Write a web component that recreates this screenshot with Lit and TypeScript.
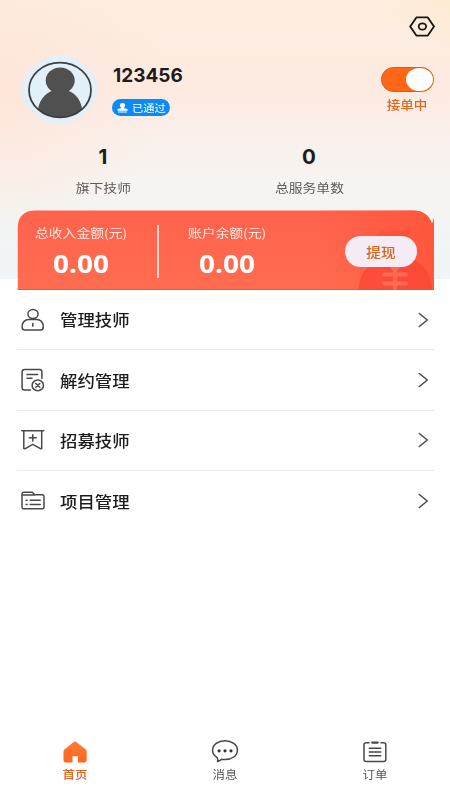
import { LitElement, html, css, svg } from "lit";
import { customElement } from "lit/decorators.js";

const menuIcons = {
  person: svg`<ellipse cx="12" cy="6" rx="5.1" ry="4.5"/><path d="M1.2 19.5v-1.7c0-3.6 3-6.2 6.4-6.2h8.2c3.6 0 6.4 2.6 6.4 6.2v1.7c0 1.6-1 2.5-2.6 2.5H3.8c-1.6 0-2.6-.9-2.6-2.5z"/><path d="M11.8 15.6v2.6"/>`,
  contract: svg`<path d="M9.5 22H3.6c-1.6 0-2.5-.8-2.5-2.3V4c0-1.5.9-2.4 2.5-2.4h15c1.5 0 2.3.9 2.3 2.4v6.5M6 6.4h10.6M6 10.3h5"/><ellipse cx="16.8" cy="17.4" rx="5.7" ry="5.3"/><path d="M14.8 15.5l4 3.8M18.8 15.5l-4 3.8"/>`,
  banner: svg`<path d="M.8 2.8h22M2.8 2.8v17.6l1 .4 8-4.4 8 4.4.9-.4V2.8M8.4 9.8h6.8M11.8 6.7v6.2"/>`,
  folder: svg`<path d="M1 18.2V4.9c0-1 .6-1.6 1.7-1.6h8.6l2.4 2.5h7.5c1.1 0 1.8.6 1.8 1.6v10.8c0 1.1-.7 1.6-1.8 1.6H2.7C1.6 19.8 1 19.3 1 18.2zM1 5.9h12.7"/><path d="M5 11.3h1M9.2 11.3h10M5 15.4h1M9.2 15.4h10"/>`,
};

const rows = [
  { icon: menuIcons.person, label: "管理技师" },
  { icon: menuIcons.contract, label: "解约管理" },
  { icon: menuIcons.banner, label: "招募技师" },
  { icon: menuIcons.folder, label: "项目管理" },
];

@customElement("app-root")
export class AppRoot extends LitElement {
  static styles = css`
    :host {
      display: flex;
      flex-direction: column;
      position: relative;
      width: 450px;
      height: 800px;
      overflow: hidden;
      background: #fff;
      color: #1c1c1c;
      font-family: "Noto Sans", "Noto Sans CJK SC", sans-serif;
    }
    * { box-sizing: border-box; }
    svg { display: block; flex: none; }
    .cjk { font-family: "Noto Sans CJK SC", sans-serif; }
    .wide { display: inline-block; white-space: nowrap; transform: scaleX(1.13); }
    .left { transform-origin: left center; }
    .hero {
      height: 279px;
      flex: none;
      background:
        linear-gradient(205deg, #fdebd2 0, #fdebd200 12%),
        radial-gradient(ellipse 170px 150px at 0 85px, #fee6d9 0, #fee6d900 100%),
        linear-gradient(180deg, #fdeee2 0, #fdeae0 32%, #f9f1ec 50%, #f5f4f2 72%, #eff4f7 100%);
    }
    .top { display: flex; justify-content: flex-end; padding: 16px 15px 0 0; height: 53px; }
    .profile { display: flex; height: 74px; padding: 0 16px 0 17px; }
    .who { flex: 1; padding: 9px 0 0 12px; }
    .name { display: block; height: 28px; line-height: 28px; font-size: 19px; font-weight: 700; font-family: Inter, sans-serif; }
    .name .wide { transform: none; }
    .badge {
      display: flex; align-items: center; gap: 4px; width: 58px; height: 17px; margin: 9px 0 0 -1px;
      padding-left: 5px; border-radius: 9px; background: #098bfb; color: #fff; font-size: 10.5px; line-height: 16px;
    }
    .badge .wide { transform: scaleX(1.07); }
    .online { width: 53px; padding-top: 14px; text-align: center; color: #de681f; font-size: 12px; font-weight: 500; }
    .toggle { display: flex; justify-content: flex-end; height: 25px; border: 1px solid #d35d1c; border-radius: 13px; background: #ff6716; }
    .knob { width: 27px; height: 23px; border-radius: 50%; background: #fff; }
    .online .label { line-height: 18px; margin-top: 4px; }
    .stats { display: grid; grid-template-columns: 206px 206px; text-align: center; padding-top: 16px; }
    .num { font-size: 20.5px; font-weight: 700; line-height: 28px; font-family: Inter, sans-serif; }
    .num .wide { transform: none; }
    .stats .label { font-size: 12.2px; line-height: 18px; margin-top: 8px; color: #5d5956; }
    .card {
      position: absolute; left: 17px; top: 210px; width: 417px; height: 80px; overflow: hidden;
      display: flex; color: #fff;
    }
    .plate { position: absolute; left: 0; top: 0; }
    .sum { position: relative; text-align: center; padding-top: 14px; }
    .first { width: 128px; }
    .second { width: 136px; }
    .bar { position: relative; width: 2px; height: 53px; margin: 15px 0 0 12px; background: #ffd5cb; }
    .sum .label { font-size: 12px; line-height: 18px; color: #ffe8e1; }
    .sum .label .wide { transform: scaleX(1.15); }
    .amount { font-size: 25px; font-weight: 700; line-height: 30px; margin-top: 6px; }
    .amount .wide { transform: scaleX(1.12); }
    .withdraw {
      position: relative; width: 72px; height: 31px; margin: 26px 0 0 50px; border-radius: 16px;
      background: #f5ebf5; color: #dc6316; font-size: 13px; line-height: 31px; text-align: center; font-weight: 500;
    }
    .menu { padding: 11px 16px 0 17px; }
    .row { display: flex; align-items: center; height: 60.4px; border-bottom: 1px solid #ececec; padding: 0 3px 0 4px; }
    .row:last-child { border-bottom: 0; }
    .row .text { flex: 1; padding: 0 0 1px 15px; font-size: 15.4px; line-height: 24px; font-weight: 500; }
    .ink { fill: none; stroke: #484848; stroke-width: 1.5; stroke-linecap: round; stroke-linejoin: round; }
    .nav { margin-top: auto; height: 62px; display: grid; grid-template-columns: repeat(3, 1fr); justify-items: center; }
    .tab { display: flex; flex-direction: column; align-items: center; font-size: 11px; line-height: 16px; color: #555; gap: 2px; }
    .on { color: #dc6420; font-weight: 500; }
  `;

  render() {
    return html`
      <section class="hero">
        <div class="top">
          <svg width="26" height="21" viewBox="0 0 26 21" fill="none" stroke="#171615" stroke-width="1.8" stroke-linejoin="round">
            <path d="M7.4 1.4h11.4L25 10.5 18.8 19.6H7.4L1.2 10.5z"/><ellipse cx="13.4" cy="10.5" rx="3.7" ry="3.2"/>
          </svg>
        </div>
        <div class="profile">
          <svg width="84" height="74" viewBox="0 0 84 74">
            <defs>
              <filter id="soft" x="-10%" y="-10%" width="120%" height="120%"><feGaussianBlur stdDeviation="1.6"/></filter>
              <clipPath id="face"><ellipse cx="43" cy="37" rx="31" ry="27.5"/></clipPath>
            </defs>
            <path filter="url(#soft)" fill="#e2f0f9" d="M25 7Q43-2 60 6L75 19Q87 37 75 53L60 67Q43 75 25 67L10 54Q-2 37 10 19z"/>
            <g clip-path="url(#face)" fill="#505050">
              <ellipse cx="43.2" cy="27.5" rx="14.5" ry="13"/>
              <path d="M20.5 62C20.5 48 28 40 36 37.5h14.5C59 40 65.500 48 65.500 62v5h-45z"/><path d="M34 35h18l-1 6H35z"/>
            </g>
            <ellipse cx="43" cy="37" rx="31" ry="27.3" fill="none" stroke="#3f3f42" stroke-width="1.8"/>
          </svg>
          <div class="who">
            <span class="name"><span class="wide left">123456</span></span>
            <div class="badge">
              <svg width="11" height="10" viewBox="0 0 11 10" fill="#fff"><ellipse cx="5.5" cy="2.4" rx="2.6" ry="2.3"/><path d="M4.2 3h2.6l.3 2.3 3.4.7v1.8H.5V6l3.4-.7zM1 8.4h9v1.2H1z"/></svg>
              <span class="wide left cjk">已通过</span>
            </div>
          </div>
          <div class="online">
            <div class="toggle"><div class="knob"></div></div>
            <div class="label cjk"><span class="wide">接单中</span></div>
          </div>
        </div>
        <div class="stats">
          <div><div class="num"><span class="wide">1</span></div><div class="label cjk"><span class="wide">旗下技师</span></div></div>
          <div><div class="num"><span class="wide">0</span></div><div class="label cjk"><span class="wide">总服务单数</span></div></div>
        </div>
      </section>
      <section class="card">
        <svg class="plate" width="417" height="80" viewBox="0 0 417 80">
          <defs>
            <linearGradient id="red" x1="0" y1="0" x2="0" y2="1"><stop offset="0" stop-color="#ff624c"/><stop offset="1" stop-color="#ff6d50"/></linearGradient>
            <linearGradient id="edge"><stop offset=".72" stop-color="#ff5339" stop-opacity="0"/><stop offset="1" stop-color="#ff5339" stop-opacity=".8"/></linearGradient>
            <path id="shape" d="M.7 80V18Q.7.5 19 .5H396Q411 .5 415 14L417 8V80z"/>
          </defs>
          <use href="#shape" fill="url(#red)"/><use href="#shape" fill="url(#edge)"/>
          <path d="M.7 79.5H417" stroke="#fc5237"/>
          <path fill="#fa4a38" opacity=".5" d="M359 24l6-3q6 2 12-1 6 2 16-1l1 3-7 9h-24z"/>
          <path fill="#fa4435" opacity=".7" d="M342 80q-1-18 16-28l10-5h22q24 7 25 33z"/>
          <g fill="none" stroke="#ff6a57" stroke-width="4" stroke-linecap="round"><path d="M369 50l9 10 9-10M367 64.500h22M367 73.500h22M378 60v22"/></g>
        </svg>
        <div class="sum first"><div class="label cjk"><span class="wide">总收入金额(元)</span></div><div class="amount"><span class="wide">0.00</span></div></div>
        <div class="bar"></div>
        <div class="sum second"><div class="label cjk"><span class="wide">账户余额(元)</span></div><div class="amount"><span class="wide">0.00</span></div></div>
        <div class="withdraw cjk"><span class="wide">提现</span></div>
      </section>
      <section class="menu">
        ${rows.map((r) => html`
          <div class="row">
            <svg class="ink" width="24" height="24" viewBox="0 0 24 24">${r.icon}</svg>
            <div class="text cjk"><span class="wide left">${r.label}</span></div>
            <svg class="ink" width="15" height="16" viewBox="0 0 15 16"><path d="M3.3 1.5l8 6.5-8 6.5"/></svg>
          </div>`)}
      </section>
      <nav class="nav">
        <div class="tab on">
          <svg width="26" height="26" viewBox="0 0 26 26">
            <defs><linearGradient id="home" x1="0" y1="0" x2="0" y2="1"><stop stop-color="#fb7d38"/><stop offset="1" stop-color="#ff6420"/></linearGradient></defs>
            <path fill="url(#home)" d="M11.7 4q1.3-1 2.6 0l9.2 7.2q1.2.9 1.2 2.2v8q0 3.2-3.5 3.2H16v-6.4h-5.500v6.400H5q-3.500 0-3.500-3.200v-8q0-1.300 1.100-2.200z"/>
          </svg>
          <span class="wide cjk">首页</span>
        </div>
        <div class="tab">
          <svg class="ink" width="28" height="26" viewBox="0 0 28 26">
            <path d="M6.2 19.6C3.3 17.8 1.6 15.3 1.6 12.3 1.6 6.600 7.200 2.700 14 2.700s12.400 3.900 12.400 9.500S20.800 21.600 14 21.600c-1.200 0-2.300-.1-3.400-.3-1.200 1-2.500 1.700-4.100 2.200q.7-1.900-.3-3.900z"/>
            <g fill="#333" stroke="none"><circle cx="8.1" cy="12.8" r="1.6"/><circle cx="14" cy="12.8" r="1.6"/><circle cx="20" cy="12.8" r="1.6"/></g>
          </svg>
          <span class="wide cjk">消息</span>
        </div>
        <div class="tab">
          <svg class="ink" width="26" height="26" viewBox="0 0 26 26">
            <path d="M7 4.800H4.400C2.800 4.800 2 5.500 2 6.800v14.800c0 1.300.8 2 2.400 2h17c1.600 0 2.400-.7 2.400-2V6.800c0-1.300-.8-2-2.400-2H19M7.300 10.200h11.400M7.300 13.900h11.400M7.300 17.700h11.400"/><path d="M10.200 4.600h5.500" stroke-width="2.3"/>
          </svg>
          <span class="wide cjk">订单</span>
        </div>
      </nav>
    `;
  }
}
